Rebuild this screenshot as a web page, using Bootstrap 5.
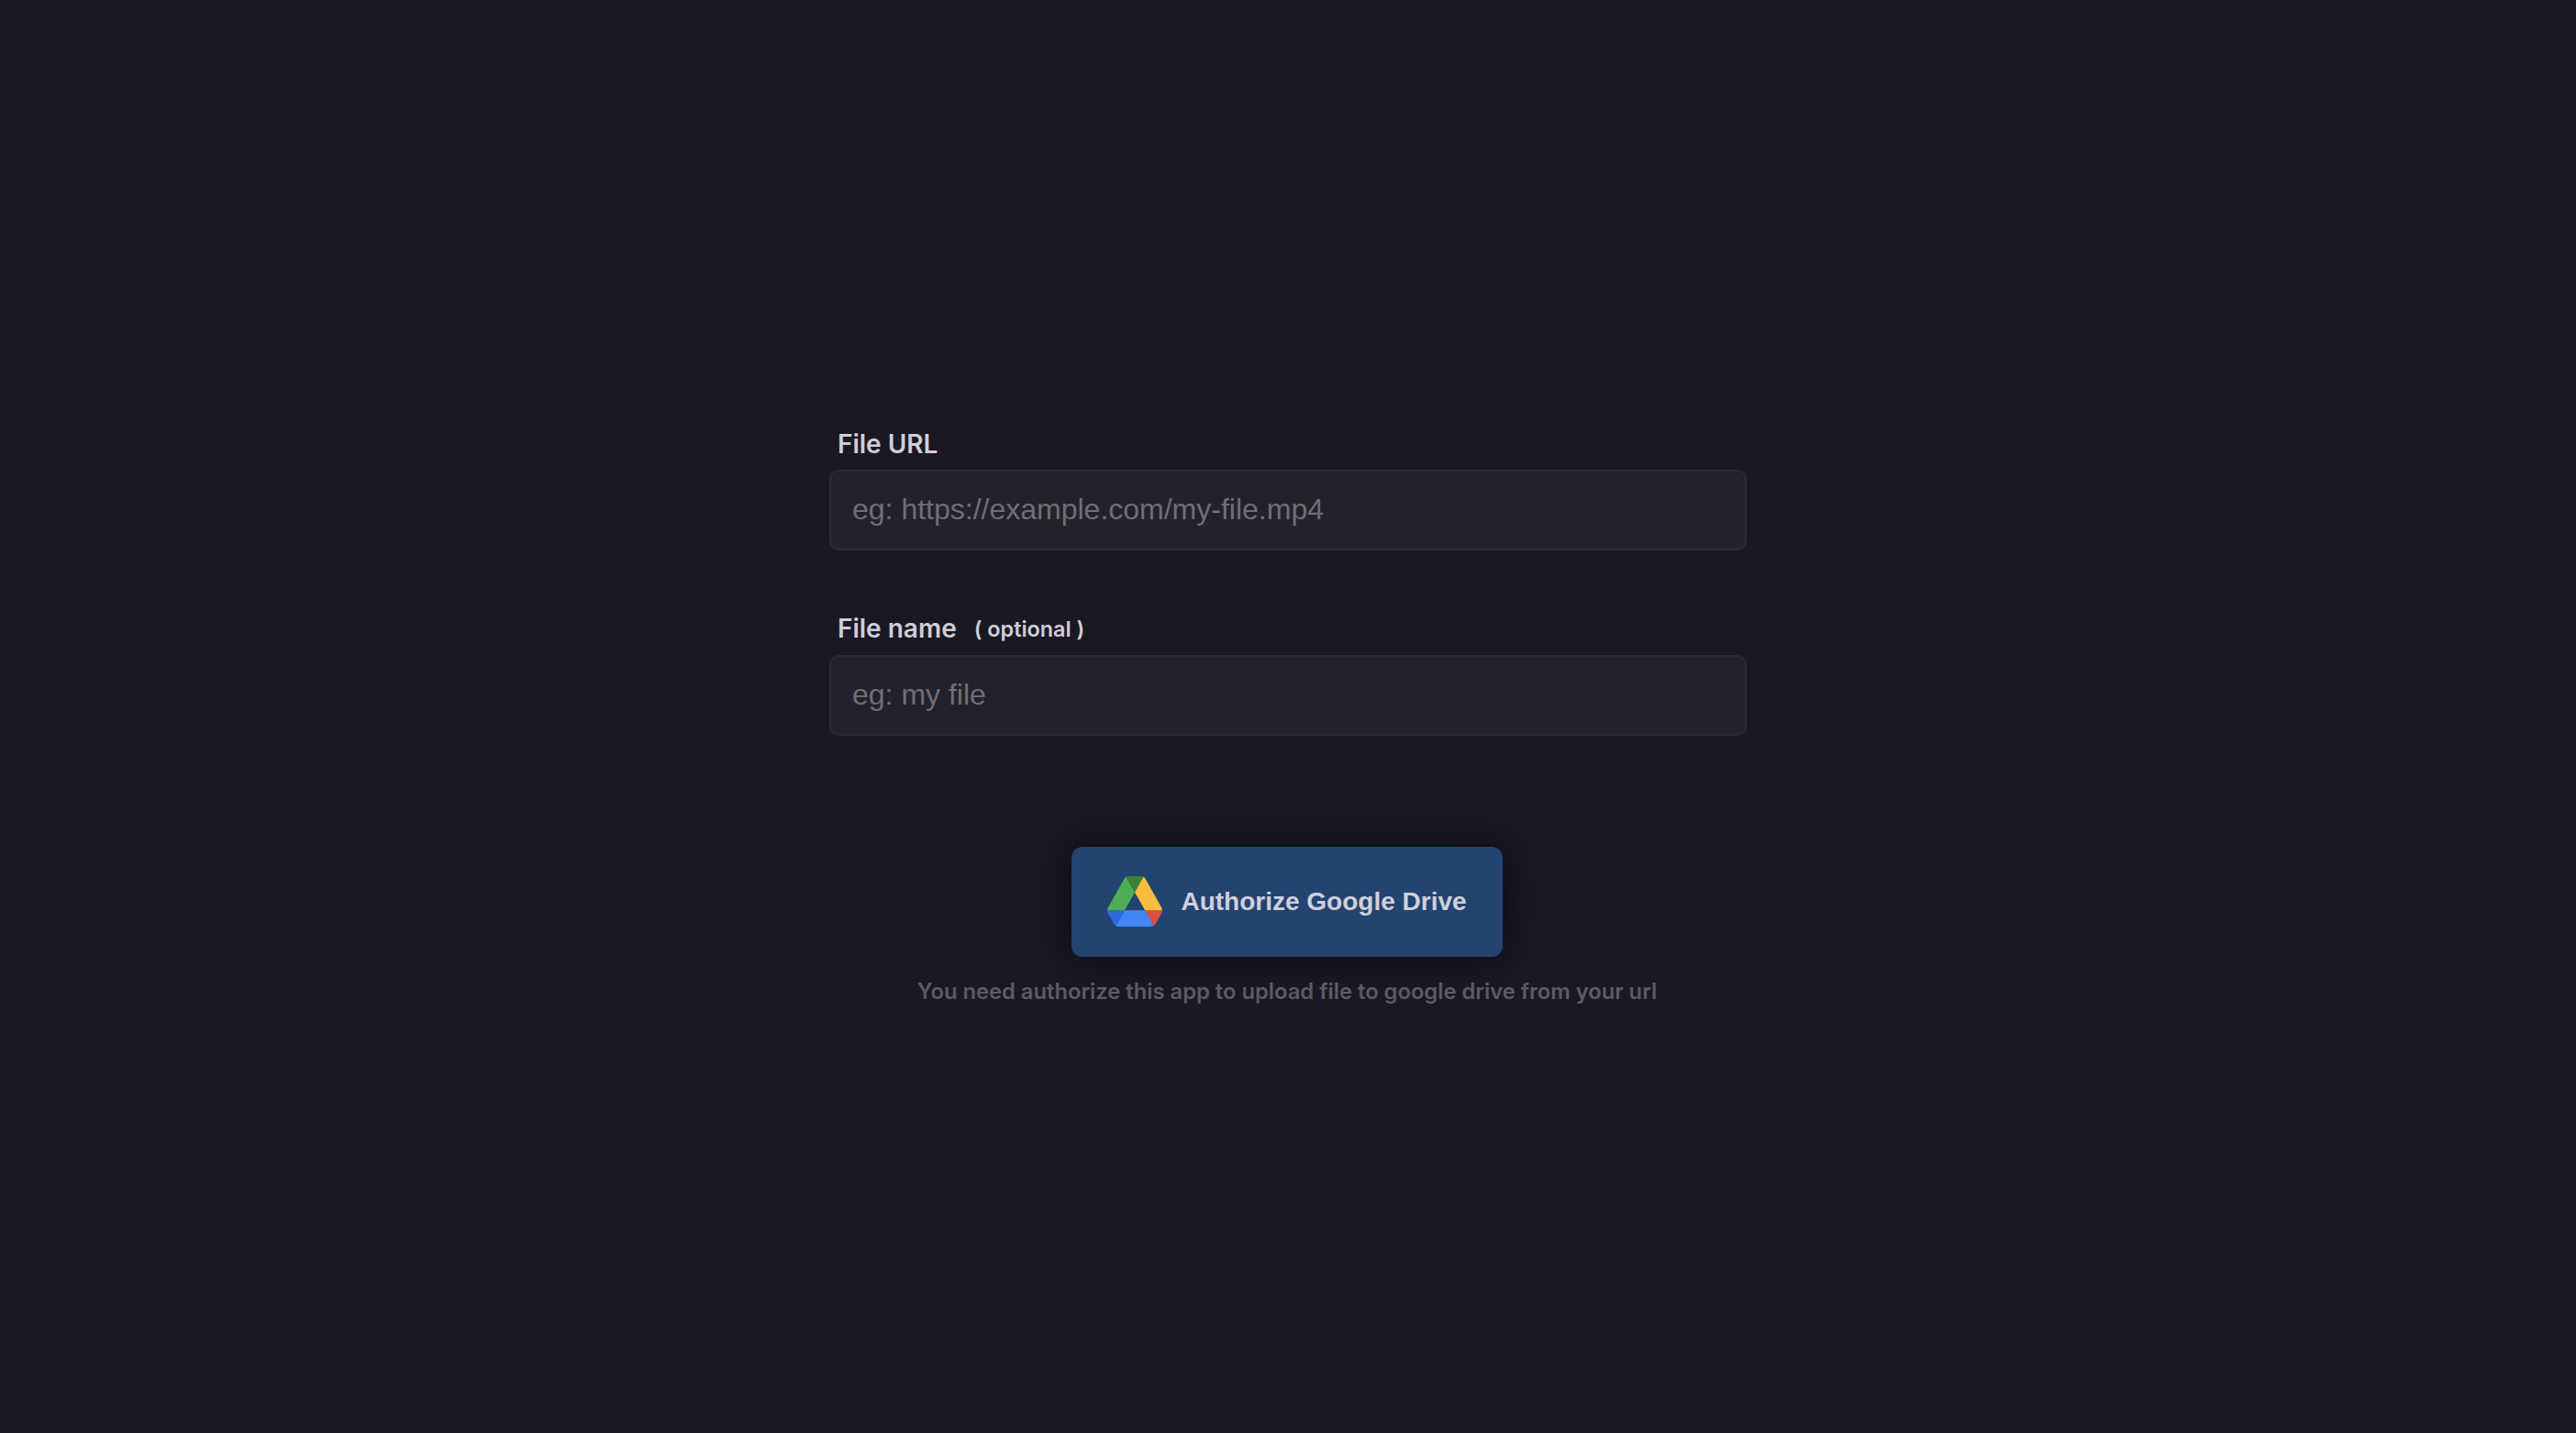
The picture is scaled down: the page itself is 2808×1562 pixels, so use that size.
<!DOCTYPE html>
<html lang="en">
<head>
<meta charset="utf-8">
<title>Authorize Google Drive</title>
<link href="https://cdn.jsdelivr.net/npm/bootstrap@5.3.0/dist/css/bootstrap.min.css" rel="stylesheet">
<style>
html,body{height:100%}
body{background:#1a1923;font-family:"Inter","Liberation Sans",sans-serif;color:#cfcdd9}
.stage{min-height:100vh;padding-bottom:2px}
.upload-form{width:1000px}
.field-block{margin-bottom:64px}
.field-label{display:flex;align-items:center;gap:19px;font-size:28px;font-weight:600;line-height:40px;margin:0 0 8px 9px;color:#cfcdd9}
.field-opt{font-size:23.4px;font-weight:600;color:#cfcdd9;padding-top:2px}
.field-input.form-control{height:88px;background:#22222d;border:2px solid #2a2a36;border-radius:10px;padding:0 23px;font-family:"Liberation Sans",sans-serif;font-size:32px;color:#cfcdd9;box-shadow:none}
.field-input.form-control::placeholder{color:#6f6f73;opacity:1}
.action-col{margin-right:2px}
.drive-btn.btn{width:470px;height:120px;margin-top:121px;gap:20px;background:#234370;border:0;border-radius:12px;color:#cfd0dc;font-family:"Liberation Sans",sans-serif;font-size:28px;font-weight:700;box-shadow:0 0 40px rgba(0,0,0,.6)}
.drive-btn.btn:hover{background:#234370;color:#cfd0dc}
.hint-text{font-size:23.75px;font-weight:600;line-height:32px;color:#5b5a66;margin:22px 0 0}
</style>
</head>
<body>
<main class="stage d-flex justify-content-center align-items-center">
  <form class="upload-form d-flex flex-column">
    <div class="field-block">
      <label class="field-label" for="u">File URL</label>
      <input id="u" class="form-control field-input" type="text" placeholder="eg: https://example.com/my-file.mp4">
    </div>
    <div class="field-block mb-0">
      <label class="field-label" for="n">File name <span class="field-opt">( optional )</span></label>
      <input id="n" class="form-control field-input" type="text" placeholder="eg: my file">
    </div>
    <div class="action-col d-flex flex-column align-items-center">
      <button type="button" class="btn drive-btn d-flex align-items-center justify-content-center">
        <svg width="60" height="55" viewBox="0 0 87.3 78" preserveAspectRatio="none" aria-hidden="true">
          <path d="m6.6 66.85 3.85 6.65c.8 1.4 1.95 2.5 3.3 3.3l13.75-23.8h-27.5c0 1.55.4 3.1 1.2 4.5z" fill="#2e6bd9"/>
          <path d="m43.65 25-13.75-23.8c-1.35.8-2.5 1.9-3.3 3.3l-25.4 44a9.06 9.06 0 0 0 -1.2 4.5h27.5z" fill="#4fac57"/>
          <path d="m73.55 76.8c1.35-.8 2.5-1.9 3.3-3.3l1.6-2.75 7.65-13.25c.8-1.4 1.2-2.95 1.2-4.5h-27.502l5.852 11.5z" fill="#db5040"/>
          <path d="m43.65 25 13.75-23.8c-1.35-.8-2.9-1.2-4.5-1.2h-18.5c-1.6 0-3.15.45-4.5 1.2z" fill="#3a8237"/>
          <path d="m59.8 53h-32.3l-13.75 23.8c1.35.8 2.9 1.2 4.5 1.2h50.8c1.6 0 3.15-.45 4.5-1.2z" fill="#4285f4"/>
          <path d="m73.4 26.5-12.7-22c-.8-1.4-1.95-2.5-3.3-3.3l-13.75 23.8 16.15 28h27.45c0-1.55-.4-3.1-1.2-4.5z" fill="#f9bc3f"/>
        </svg>
        <span>Authorize Google Drive</span>
      </button>
      <p class="hint-text">You need authorize this app to upload file to google drive from your url</p>
    </div>
  </form>
</main>
<script src="https://cdn.jsdelivr.net/npm/bootstrap@5.3.0/dist/js/bootstrap.bundle.min.js"></script>
</body>
</html>
